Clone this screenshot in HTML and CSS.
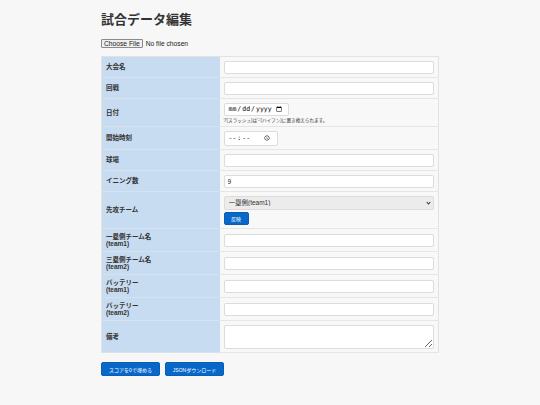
FILE: index.html
```html
<!DOCTYPE html>
<html lang="ja">
<head>
    <meta charset="UTF-8">
    <meta name="viewport" content="width=device-width, initial-scale=1.0">
    <title>試合データ編集</title>
    <link rel="stylesheet" href="styles.css">
</head>
<body>
    <div class="container">
        <h1>試合データ編集</h1>

        <div class="file-row">
            <input type="file" id="json-file" accept=".json">
        </div>

        <table class="edit-table">
            <tr>
                <th>大会名</th>
                <td><input type="text" id="tournament"></td>
            </tr>
            <tr>
                <th>回戦</th>
                <td><input type="text" id="round"></td>
            </tr>
            <tr>
                <th>日付</th>
                <td>
                    <input type="date" id="date" class="date-input">
                    <div class="hint">'/'(スラッシュ)は'-'(ハイフン)に置き換えられます。</div>
                </td>
            </tr>
            <tr>
                <th>開始時刻</th>
                <td><input type="time" id="start-time" class="time-input"></td>
            </tr>
            <tr>
                <th>球場</th>
                <td><input type="text" id="stadium"></td>
            </tr>
            <tr>
                <th>イニング数</th>
                <td><input type="text" id="innings" value="9"></td>
            </tr>
            <tr>
                <th>先攻チーム</th>
                <td>
                    <div class="select-wrap">
                        <select id="first-team">
                            <option value="team1">一塁側(team1)</option>
                            <option value="team2">三塁側(team2)</option>
                        </select>
                    </div>
                    <button type="button" class="btn btn-small">反映</button>
                </td>
            </tr>
            <tr>
                <th>一塁側チーム名<br>(team1)</th>
                <td><input type="text" id="team1-name"></td>
            </tr>
            <tr>
                <th>三塁側チーム名<br>(team2)</th>
                <td><input type="text" id="team2-name"></td>
            </tr>
            <tr>
                <th>バッテリー<br>(team1)</th>
                <td><input type="text" id="team1-battery"></td>
            </tr>
            <tr>
                <th>バッテリー<br>(team2)</th>
                <td><input type="text" id="team2-battery"></td>
            </tr>
            <tr>
                <th>備考</th>
                <td><textarea id="note"></textarea></td>
            </tr>
        </table>

        <div class="actions">
            <button type="button" class="btn">スコアを0で埋める</button>
            <button type="button" class="btn">JSONダウンロード</button>
        </div>
    </div>
</body>
</html>
```

FILE: styles.css
```css
* {
    margin: 0;
    padding: 0;
    box-sizing: border-box;
}

body {
    font-family: 'Liberation Sans', 'Noto Sans CJK JP', sans-serif;
    background: #f7f7f7;
    color: #333;
    font-size: 6.5px;
}

.container {
    width: 338px;
    margin: 0 auto;
    padding-top: 10px;
}

h1 {
    font-size: 13px;
    font-weight: bold;
    line-height: 20px;
    margin-bottom: 9px;
    color: #333;
}

.file-row {
    height: 9px;
    margin-bottom: 8px;
    display: flex;
    align-items: center;
}

.file-row input[type="file"] {
    font-family: 'Liberation Sans', sans-serif;
    font-size: 6.7px;
    line-height: 9px;
    color: #222;
}

.file-row input[type="file"]::file-selector-button {
    font-family: 'Liberation Sans', sans-serif;
    font-size: 6.7px;
    height: 9px;
    padding: 0 2px;
    margin-right: 3px;
    background: #efefef;
    border: 1px solid #8a8a8a;
    border-radius: 1px;
    color: #222;
}

.edit-table {
    width: 100%;
    border-collapse: collapse;
    border: 1px solid #e2e2e2;
}

.edit-table th {
    width: 118px;
    background: #c7dcf0;
    text-align: left;
    font-weight: bold;
    font-size: 6.5px;
    line-height: 7.5px;
    padding: 3.5px 4px;
    border-bottom: 1px solid #d6e3ef;
    color: #333;
}

.edit-table td {
    padding: 3.5px 4px;
    border-bottom: 1px solid #e6e6e6;
    background: #f8f8f8;
}

.edit-table input[type="text"],
.edit-table textarea {
    width: 100%;
    height: 13px;
    border: 1px solid #dcdcdc;
    border-radius: 2px;
    background: #fff;
    padding: 0 3px;
    font-family: 'Liberation Sans', sans-serif;
    font-size: 6.5px;
    color: #222;
    display: block;
}

.edit-table textarea {
    height: 24px;
    resize: vertical;
}

.date-input {
    width: 65px;
    height: 13px;
    font-size: 6.5px;
    border: 1px solid #dcdcdc;
    border-radius: 2px;
    background: #fff;
    padding: 0 3px;
    display: block;
}

.time-input {
    width: 54px;
    height: 15px;
    font-size: 6.5px;
    border: 1px solid #dcdcdc;
    border-radius: 2px;
    background: #fff;
    padding: 0 3px;
    display: block;
}

.hint {
    font-size: 4.6px;
    line-height: 5px;
    margin-top: 2px;
    color: #333;
}

.select-wrap {
    position: relative;
}

.select-wrap::after {
    content: "";
    position: absolute;
    right: 4px;
    top: 5px;
    width: 2px;
    height: 2px;
    border-right: 1px solid #333;
    border-bottom: 1px solid #333;
    transform: rotate(45deg);
    pointer-events: none;
}

.edit-table select {
    appearance: none;
    width: 100%;
    height: 14px;
    font-family: 'Liberation Sans', 'Noto Sans CJK JP', sans-serif;
    font-size: 6.5px;
    background: #ececec;
    border: 1px solid #dcdcdc;
    border-radius: 2px;
    padding: 0 4px;
    color: #333;
    display: block;
}

.btn {
    background: #0868c9;
    color: #fff;
    border: 1px solid #0a5db3;
    border-radius: 2px;
    font-family: 'Liberation Sans', 'Noto Sans CJK JP', sans-serif;
    font-size: 5px;
    height: 14px;
    padding: 0 6px;
    white-space: nowrap;
    cursor: pointer;
}

.btn-small {
    margin-top: 2px;
    height: 13px;
    width: 25px;
    padding: 0;
}

.actions {
    display: flex;
    gap: 5px;
    margin-top: 9px;
}

.actions .btn {
    width: 59px;
    padding: 0;
}
```
